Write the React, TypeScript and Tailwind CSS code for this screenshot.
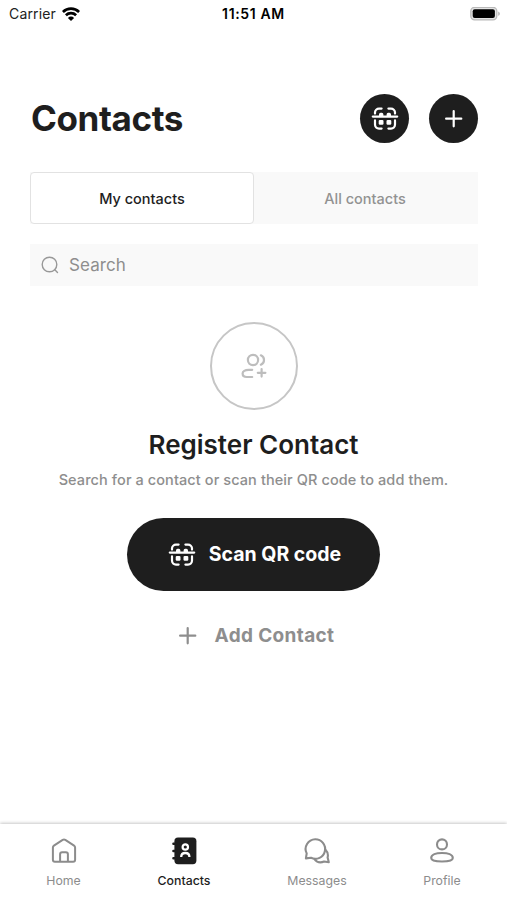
import { useState } from 'react';

function ScanIcon() {
  return (
    <svg width="28" height="24" viewBox="0 0.6 28 24" fill="none" stroke="currentColor" strokeWidth="2.2" strokeLinecap="round">
      <path d="M1.8 10.2h24.4" />
      <path d="M4 7.2V6a4 4 0 0 1 4-3.8h2.6M17.4 2.2H20a4 4 0 0 1 4 3.8v1.2M4 14v4.2a4 4 0 0 0 4 4h2.6M17.4 22.2H20a4 4 0 0 0 4-4V14" />
      <path d="M8 9.5V8a1.6 1.6 0 0 1 1.6-1.6h1.2A1.6 1.6 0 0 1 12.4 8v1.5zM15.6 9.5V8a1.6 1.6 0 0 1 1.6-1.6h1.2A1.6 1.6 0 0 1 20 8v1.5z" fill="currentColor" stroke="none" />
      <rect x="7.7" y="13.5" width="4.8" height="4.8" rx="1.2" fill="currentColor" stroke="none" />
      <rect x="15.5" y="13.5" width="4.8" height="4.8" rx="1.2" fill="currentColor" stroke="none" />
    </svg>
  );
}

function PlusIcon() {
  return (
    <svg width="18" height="18" viewBox="0 0 18 18" stroke="currentColor" strokeWidth="2.2" strokeLinecap="round">
      <path d="M8.7 1.1v15.2M1.1 8.7h15.2" />
    </svg>
  );
}

function WifiIcon() {
  return (
    <svg width="18" height="14" viewBox="0 0 18 14" fill="none" stroke="#000" strokeWidth="2.7">
      <path d="M.9 5a11.5 11.5 0 0 1 16.2 0" />
      <path d="M3.9 8.3a7.3 7.3 0 0 1 10.2 0" />
      <path d="M9 14 5.9 10.9a4.4 4.4 0 0 1 6.2 0z" fill="#000" stroke="none" />
    </svg>
  );
}

function BatteryIcon() {
  return (
    <svg width="31" height="15" viewBox="0 0.5 31 15">
      <rect x=".8" y=".8" width="26" height="12.6" rx="3.8" fill="#e4e4e4" stroke="#b9b9b9" strokeWidth="1.3" />
      <rect x="2.7" y="2.7" width="22.2" height="8.8" rx="2" fill="#000" />
      <path d="M28.2 5c2.2.8 2.2 3.5 0 4.3z" fill="#b5b5b5" />
    </svg>
  );
}

function AddUserIcon() {
  return (
    <svg width="28" height="28" viewBox="0 0 28 28" fill="none" stroke="currentColor" strokeWidth="2.2" strokeLinecap="round">
      <circle cx="13" cy="8" r="5.1" />
      <path d="M20.900 3.300a5.100 5.100 0 0 1 0 9.400M12.200 17.800H8.600c-3.600 0-6 1.500-6 3.700s1.600 3.500 4.200 3.500h5.400M21.600 17v7.600M17.800 20.800h7.600" />
    </svg>
  );
}

function HomeIcon() {
  return (
    <svg width="28" height="28" viewBox="0 0 28 28" fill="none" stroke="currentColor" strokeWidth="2" strokeLinejoin="round">
      <path d="M2.9 10.4c0-.8.4-1.4 1-1.8l8.8-5.7c.8-.5 1.8-.5 2.6 0l8.8 5.7c.6.4 1 1 1 1.8v12.3c0 1.1-.9 2-2 2H4.9c-1.1 0-2-.9-2-2z" />
      <path d="M10.1 24.7v-7.5c0-1.100.9-2 2-2h3.800c1.100 0 2 .9 2 2v7.500" />
    </svg>
  );
}

function ContactsIcon() {
  return (
    <svg width="28" height="28" viewBox="0 0 28 28">
      <rect x="4.4" y=".6" width="22" height="26.6" rx="3.6" fill="currentColor" />
      <path d="M3.4 6.8h3M3.4 14h3M3.4 21.2h3" stroke="currentColor" strokeWidth="2.4" strokeLinecap="round" />
      <circle cx="15.3" cy="10" r="2.7" fill="none" stroke="#fff" strokeWidth="2.2" />
      <path d="M11.2 20c0-2.700 1.500-4 4.100-4s4.100 1.300 4.100 4" fill="none" stroke="#fff" strokeWidth="2.300" />
    </svg>
  );
}

function MessagesIcon() {
  return (
    <svg width="28" height="28" viewBox="0 0 28 28" fill="none" stroke="currentColor" strokeWidth="2.1" strokeLinejoin="round">
      <path d="M12.200 2.200A9.800 9.800 0 1 1 8 20.800L2.900 21.400l.8-5A9.800 9.800 0 0 1 12.200 2.200z" />
      <path d="M22.300 12.400a8.500 8.500 0 0 1 2.300 8.200l1.200 4.600-4.700-.7c-3.600 1.700-7.400.7-9.900-2.700" />
    </svg>
  );
}

function ProfileIcon() {
  return (
    <svg width="28" height="28" viewBox="0 0 28 28" fill="none" stroke="currentColor" strokeWidth="2.1">
      <circle cx="14" cy="7.4" r="5" />
      <path d="M14 16c-6 0-10.800 1.400-10.800 5 0 3 4.300 3.500 10.800 3.500s10.800-.5 10.800-3.500c0-3.600-4.800-5-10.800-5z" />
    </svg>
  );
}

const tabs = ['My contacts', 'All contacts'];

const navItems = [
  { label: 'Home', Icon: HomeIcon, width: 'w-[127px]' },
  { label: 'Contacts', Icon: ContactsIcon, width: 'w-[114px]' },
  { label: 'Messages', Icon: MessagesIcon, width: 'w-[152px]' },
  { label: 'Profile', Icon: ProfileIcon, width: 'w-[98px]' },
];

export default function App() {
  const [tab, setTab] = useState('My contacts');
  const [page, setPage] = useState('Contacts');

  return (
    <div className="flex h-[900px] w-[507px] flex-col overflow-hidden bg-white font-['Inter',sans-serif] text-[#1e1e1e]">
      <header className="grid h-7 grid-cols-3 items-center pr-1.5 pl-[9px] text-sm text-black">
        <div className="flex items-center gap-1.5">
          <span className="tracking-[0.15px] text-[#222]">Carrier</span>
          <WifiIcon />
        </div>
        <span className="pr-[3px] text-center font-semibold tracking-[0.65px] whitespace-nowrap">11:51 AM</span>
        <div className="flex justify-end">
          <BatteryIcon />
        </div>
      </header>

      <main className="flex flex-1 flex-col pr-[29px] pl-[30px] pt-[66px]">
        <div className="flex h-[49px] items-center justify-between">
          <h1 className="pl-px text-[35px] font-bold tracking-[-0.4px]">Contacts</h1>
          <div className="flex gap-5">
            <button className="flex size-[49px] items-center justify-center rounded-full bg-[#1e1e1e] text-white">
              <ScanIcon />
            </button>
            <button className="flex size-[49px] items-center justify-center rounded-full bg-[#1e1e1e] text-white">
              <PlusIcon />
            </button>
          </div>
        </div>

        <div className="mt-[29px] grid h-[52px] grid-cols-2 bg-[#f9f9f9]">
          {tabs.map((name) => (
            <button
              key={name}
              onClick={() => setTab(name)}
              className={`pt-0.5 text-[14.5px] font-medium ${
                tab === name ? 'rounded border border-[#e2e2e2] bg-white' : 'pr-0.5 text-[#929292]'
              }`}>
              {name}
            </button>
          ))}
        </div>

        <label className="mt-5 flex h-[42px] items-center gap-2.5 bg-[#f9f9f9] pl-[11px]">
          <svg width="18" height="18" viewBox="0 0 18 18" fill="none" stroke="#989898" strokeWidth="1.4" strokeLinecap="round">
            <circle cx="8.5" cy="8.5" r="7.3" />
            <path d="m13.8 13.8 2.7 2.7" />
          </svg>
          <input
            className="flex-1 bg-transparent pt-0.5 text-[17px] tracking-[0.1px] outline-none placeholder:text-[#8e8e8e]"
            type="text"
            placeholder="Search"
          />
        </label>

        <section className="flex flex-col items-center pt-9 pr-px">
          <div className="flex size-[88px] items-center justify-center rounded-full border-2 border-[#c6c6c6] text-[#bdbdbd]">
            <AddUserIcon />
          </div>
          <h2 className="mt-[17px] text-[26px] leading-9 font-semibold">Register Contact</h2>
          <p className="mt-1.5 text-[14.5px] leading-[22px] font-medium tracking-[0.09px] whitespace-nowrap text-[#8e8e8e]">
            Search for a contact or scan their QR code to add them.
          </p>
          <button className="mt-[27px] flex h-[73px] w-[253px] items-center justify-center gap-[13px] rounded-full bg-[#1e1e1e] pl-0.5 text-[19.5px] font-bold text-white">
            <ScanIcon />
            Scan QR code
          </button>
          <button className="mt-[31px] flex items-center gap-[18px] pl-1.5 text-[19px] leading-7 font-bold tracking-[0.35px] text-[#8e8e8e]">
            <PlusIcon />
            Add Contact
          </button>
        </section>
      </main>

      <nav className="flex h-[76px] pt-[13px] shadow-[0_-1px_3px_rgba(0,0,0,0.22)]">
        {navItems.map(({ label, Icon, width }) => (
          <button
            key={label}
            onClick={() => setPage(label)}
            className={`flex shrink-0 flex-col items-center gap-[7px] text-[12.3px] leading-[18px] ${width} ${
              page === label ? 'font-medium text-[#1e1e1e]' : 'text-[#8c8c8c]'
            }`}>
            <Icon />
            {label}
          </button>
        ))}
      </nav>
    </div>
  );
}
